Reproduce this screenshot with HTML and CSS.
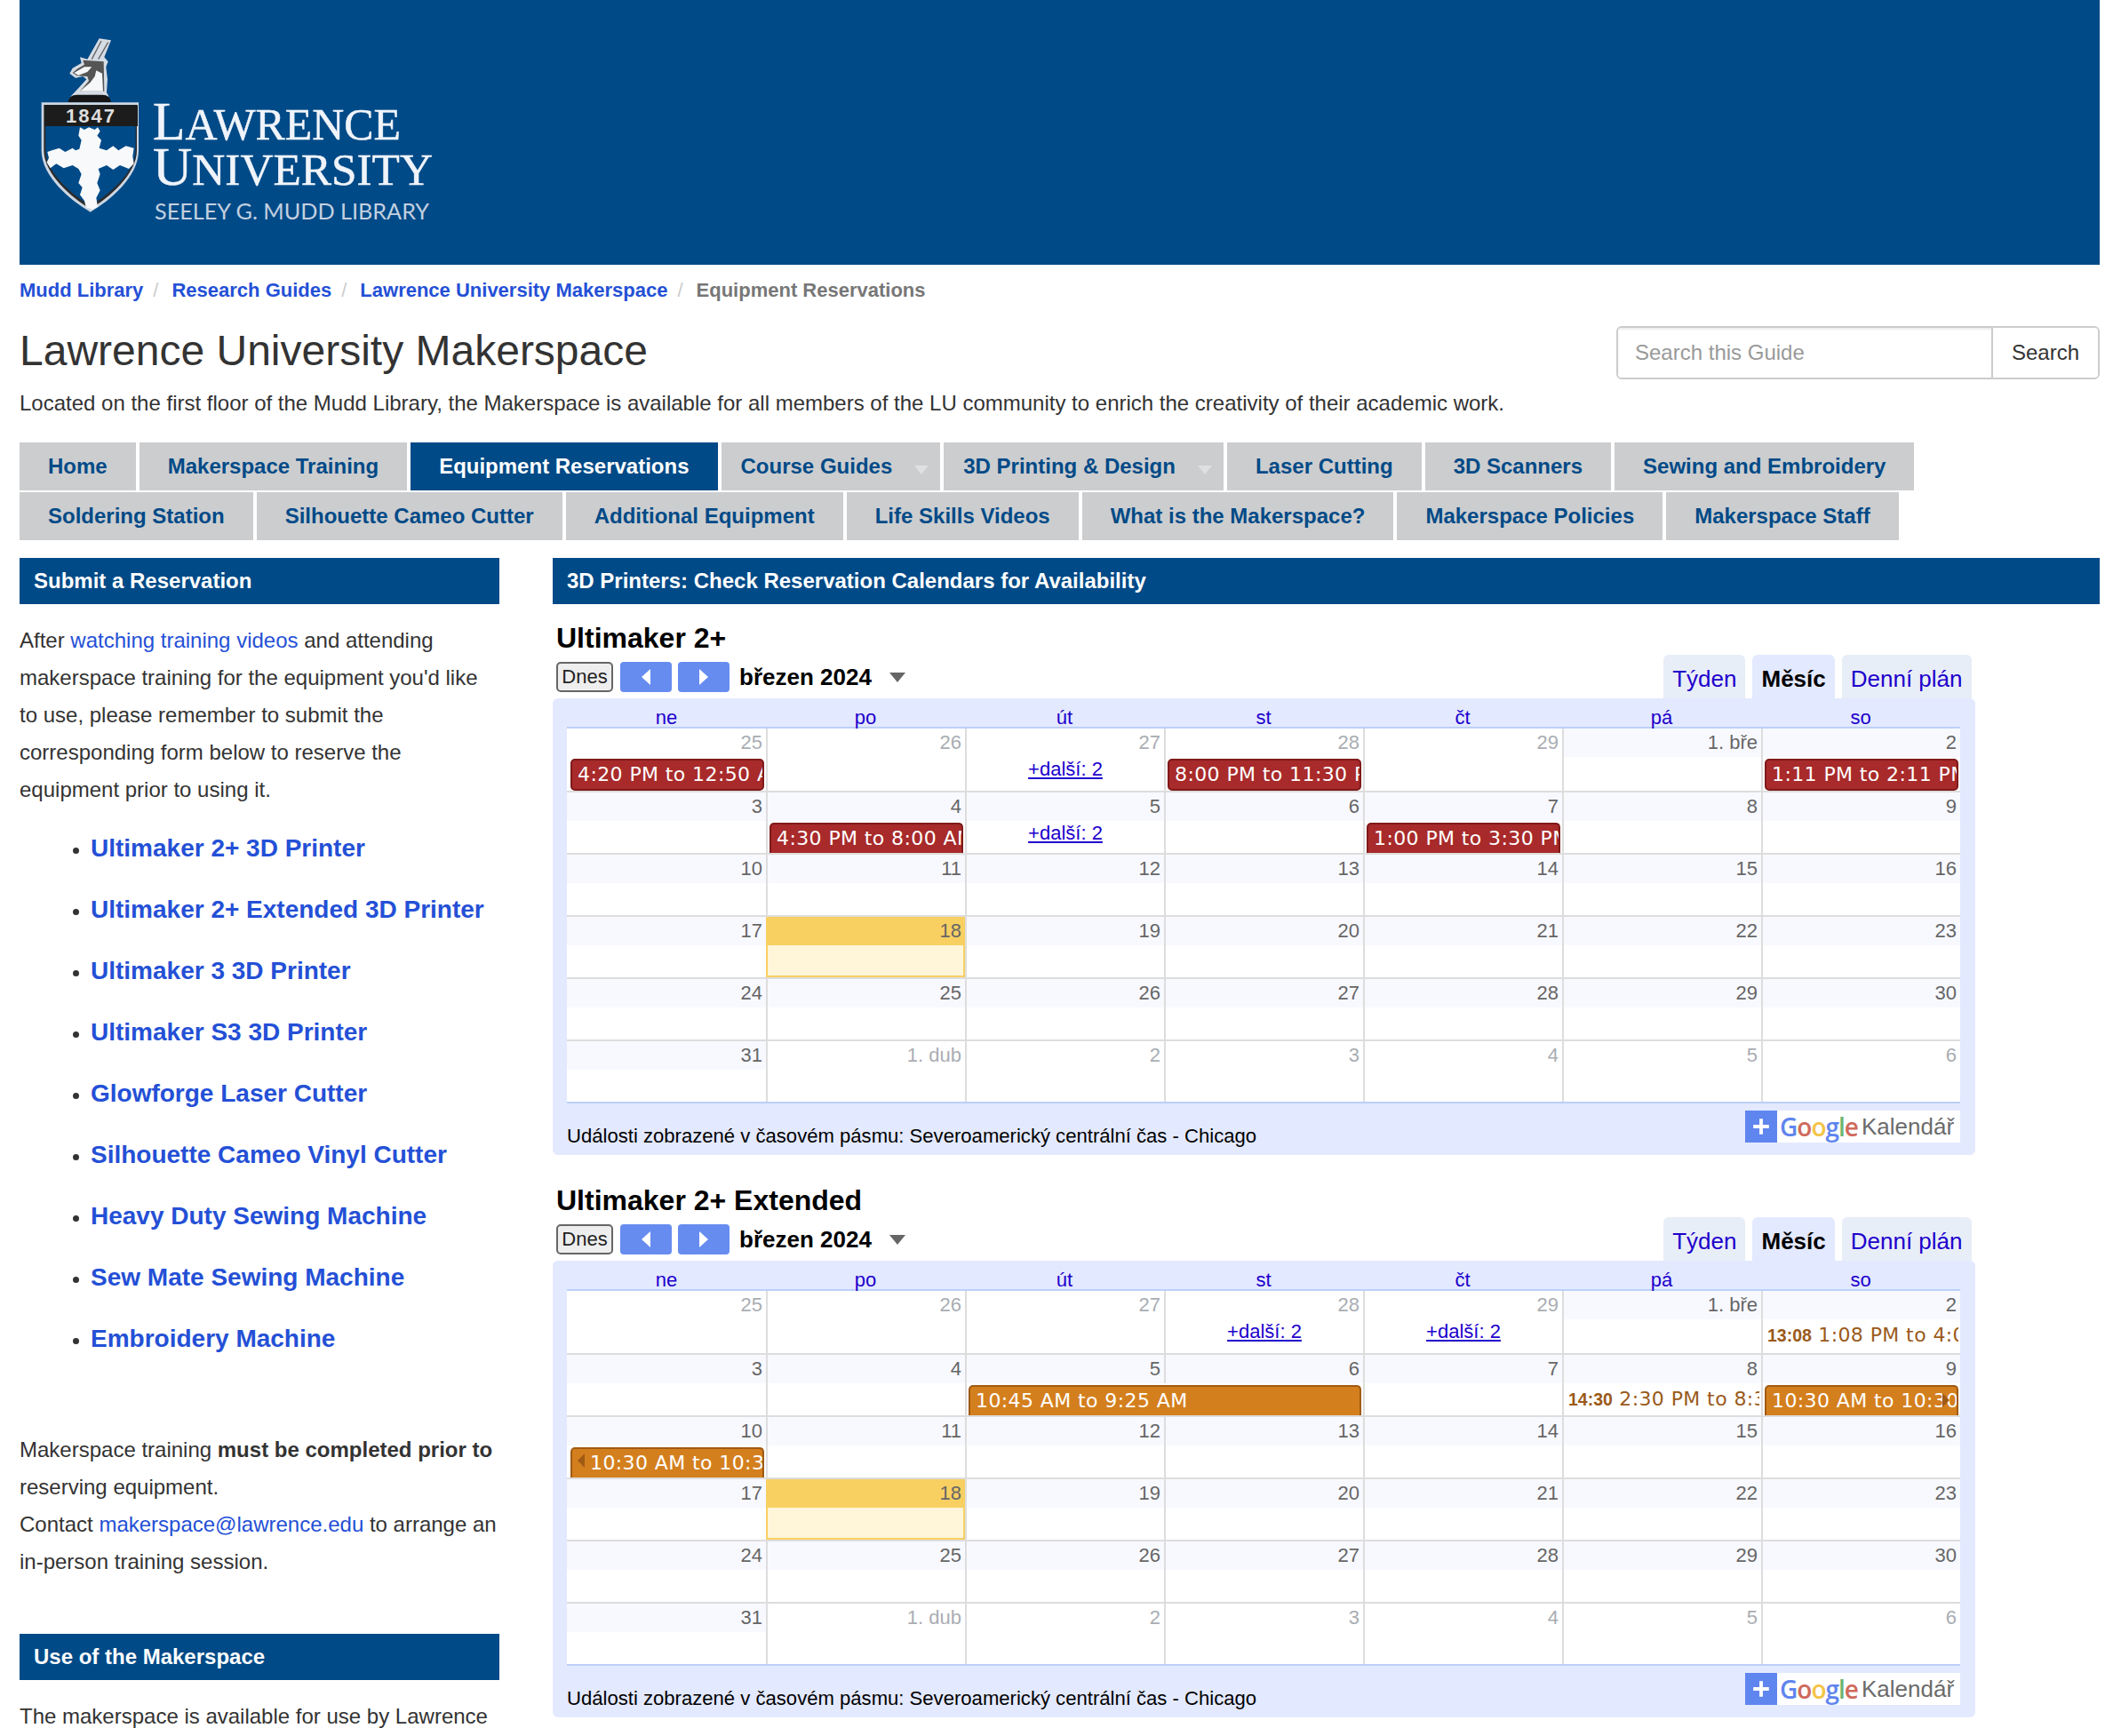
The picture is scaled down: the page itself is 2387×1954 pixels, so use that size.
FILE: index.html
```html
<!DOCTYPE html>
<html lang="cs">
<head>
<meta charset="utf-8">
<title>Equipment Reservations - Lawrence University Makerspace</title>
<link rel="stylesheet" href="styles.css">
</head>
<body>
<header class="banner">
<svg class="logo" viewBox="40 36 460 220" width="460" height="220">
  <g transform="translate(40 36) scale(.33333)">
    <path class="halo" d="M215 22 255 28 232 85 245 100 238 118 243 160 240 205 248 218H118L140 195 172 160 160 150 135 155 115 140 125 122 155 105 150 85 175 92Z"/>
    <path class="head-dark" d="M160 95 230 100 232 200H150L180 165 175 150 140 148 125 138 140 125 165 110Z"/>
    <path class="body-light" d="M205 130 225 140 228 200H150L185 170 200 150Z"/>
    <path class="body-light" d="M130 138 165 118 190 118 175 135 145 146Z"/>
    <path class="horn" d="M190 92 222 30M212 92 245 35"/>
    <path class="mound" d="M110 238C112 222 122 212 140 212H225C243 212 253 222 255 238Z"/>
    <path class="shield" d="M20 238H348V400C348 490 250 570 185 608 120 570 20 490 20 400Z"/>
    <path class="rim" d="M28 246H342V400C342 480 248 560 185 598 122 560 28 480 28 400Z"/>
    <path class="field" d="M34 318H338V400C338 475 246 550 185 588 124 550 34 475 34 400Z"/>
    <rect class="band" x="31" y="247" width="314" height="71"/>
    <path class="cross" d="M150 322 165 330 180 322 200 330 210 322 218 335 208 350 222 365 215 392 240 400 262 385 280 400 305 385 332 392 328 420 332 445 315 462 285 450 262 465 240 450 212 462 218 480 208 510 218 535 205 560 210 590 190 600 170 592 165 570 150 550 158 525 145 510 155 480 145 462 125 450 95 460 70 445 50 460 38 440 45 425 40 405 55 400 80 392 100 405 125 392 135 400 148 395 155 365 145 350Z"/>
  </g>
  <text class="year" x="102.5" y="138">1847</text>
  <text class="lg" x="172" y="157" textLength="279" lengthAdjust="spacingAndGlyphs"><tspan class="lg-big">L</tspan>AWRENCE</text>
  <text class="lg" x="172" y="208" textLength="315" lengthAdjust="spacingAndGlyphs"><tspan class="lg-big">U</tspan>NIVERSITY</text>
  <text class="lg3" x="174" y="247" textLength="309" lengthAdjust="spacingAndGlyphs">SEELEY G. MUDD LIBRARY</text>
</svg>
</header>

<nav class="crumbs">
  <a href="#">Mudd Library</a><span class="sep">/</span>
  <a href="#">Research Guides</a><span class="sep">/</span>
  <a href="#">Lawrence University Makerspace</a><span class="sep">/</span>
  <span class="cur">Equipment Reservations</span>
</nav>

<div class="head">
  <h1>Lawrence University Makerspace</h1>
  <form class="search">
    <input class="search-in" type="text" placeholder="Search this Guide">
    <button class="search-btn" type="button">Search</button>
  </form>
</div>
<p class="desc">Located on the first floor of the Mudd Library, the Makerspace is available for all members of the LU community to enrich the creativity of their academic work.</p>

<ul class="tabs">
  <li><a href="#">Home</a></li>
  <li><a href="#">Makerspace Training</a></li>
  <li class="on"><a href="#">Equipment Reservations</a></li>
  <li class="dd"><a href="#">Course Guides<i class="dd-caret"></i></a></li>
  <li class="dd"><a href="#">3D Printing &amp; Design<i class="dd-caret"></i></a></li>
  <li><a href="#">Laser Cutting</a></li>
  <li><a href="#">3D Scanners</a></li>
  <li><a href="#">Sewing and Embroidery</a></li>
  <li><a href="#">Soldering Station</a></li>
  <li><a href="#">Silhouette Cameo Cutter</a></li>
  <li><a href="#">Additional Equipment</a></li>
  <li><a href="#">Life Skills Videos</a></li>
  <li><a href="#">What is the Makerspace?</a></li>
  <li><a href="#">Makerspace Policies</a></li>
  <li><a href="#">Makerspace Staff</a></li>
</ul>

<div class="cols">
  <aside class="side">
    <h2 class="bar">Submit a Reservation</h2>
    <p class="txt first">After <a href="#">watching training videos</a> and attending makerspace training for the equipment you'd like to use, please remember to submit the corresponding form below to reserve the equipment prior to using it.</p>
    <ul class="gear">
      <li><a href="#">Ultimaker 2+ 3D Printer</a></li>
      <li><a href="#">Ultimaker 2+ Extended 3D Printer</a></li>
      <li><a href="#">Ultimaker 3 3D Printer</a></li>
      <li><a href="#">Ultimaker S3 3D Printer</a></li>
      <li><a href="#">Glowforge Laser Cutter</a></li>
      <li><a href="#">Silhouette Cameo Vinyl Cutter</a></li>
      <li><a href="#">Heavy Duty Sewing Machine</a></li>
      <li><a href="#">Sew Mate Sewing Machine</a></li>
      <li><a href="#">Embroidery Machine</a></li>
    </ul>
    <p class="txt second">Makerspace training <b>must be completed prior to</b> reserving equipment.<br>Contact <a href="#">makerspace@lawrence.edu</a> to arrange an in-person training session.</p>
    <h2 class="bar bar2">Use of the Makerspace</h2>
    <p class="txt first">The makerspace is available for use by Lawrence</p>
  </aside>

  <main class="main">
    <h2 class="bar">3D Printers: Check Reservation Calendars for Availability</h2>

    <section class="cal">
      <h3 class="cal-title">Ultimaker 2+</h3>
      <div class="tools">
        <button class="today-btn" type="button">Dnes</button>
        <button class="arrow" type="button"><i class="tri-l"></i></button>
        <button class="arrow" type="button"><i class="tri-r"></i></button>
        <span class="month">březen 2024</span>
        <i class="month-caret"></i>
        <div class="views"><a class="view" href="#">Týden</a><span class="view cur-view">Měsíc</span><a class="view" href="#">Denní plán</a></div>
      </div>
      <div class="frame">
        <div class="dow"><span>ne</span><span>po</span><span>út</span><span>st</span><span>čt</span><span>pá</span><span>so</span></div>
        <div class="grid">
          <div class="week">
            <div class="d off">25</div><div class="d off">26</div><div class="d off">27</div><div class="d off">28</div><div class="d off">29</div><div class="d">1. bře</div><div class="d">2</div>
            <div class="e"><div class="ev red">4:20 PM to 12:50 AM</div></div><div class="e"></div><div class="e"><a class="more" href="#">+další: 2</a></div><div class="e"><div class="ev red">8:00 PM to 11:30 PM</div></div><div class="e"></div><div class="e"></div><div class="e"><div class="ev red">1:11 PM to 2:11 PM</div></div>
          </div>
          <div class="week">
            <div class="d">3</div><div class="d">4</div><div class="d">5</div><div class="d">6</div><div class="d">7</div><div class="d">8</div><div class="d">9</div>
            <div class="e"></div><div class="e"><div class="ev red cut">4:30 PM to 8:00 AM</div></div><div class="e"><a class="more" href="#">+další: 2</a></div><div class="e"></div><div class="e"><div class="ev red cut">1:00 PM to 3:30 PM</div></div><div class="e"></div><div class="e"></div>
          </div>
          <div class="week">
            <div class="d">10</div><div class="d">11</div><div class="d">12</div><div class="d">13</div><div class="d">14</div><div class="d">15</div><div class="d">16</div>
            <div class="e"></div><div class="e"></div><div class="e"></div><div class="e"></div><div class="e"></div><div class="e"></div><div class="e"></div>
          </div>
          <div class="week">
            <div class="d">17</div><div class="d now">18</div><div class="d">19</div><div class="d">20</div><div class="d">21</div><div class="d">22</div><div class="d">23</div>
            <div class="e"></div><div class="e now-body"></div><div class="e"></div><div class="e"></div><div class="e"></div><div class="e"></div><div class="e"></div>
          </div>
          <div class="week">
            <div class="d">24</div><div class="d">25</div><div class="d">26</div><div class="d">27</div><div class="d">28</div><div class="d">29</div><div class="d">30</div>
            <div class="e"></div><div class="e"></div><div class="e"></div><div class="e"></div><div class="e"></div><div class="e"></div><div class="e"></div>
          </div>
          <div class="week">
            <div class="d">31</div><div class="d off">1. dub</div><div class="d off">2</div><div class="d off">3</div><div class="d off">4</div><div class="d off">5</div><div class="d off">6</div>
            <div class="e"></div><div class="e"></div><div class="e"></div><div class="e"></div><div class="e"></div><div class="e"></div><div class="e"></div>
          </div>
        </div>
        <div class="foot">
          <span class="tz">Události zobrazené v časovém pásmu: Severoamerický centrální čas - Chicago</span>
          <a class="gcal" href="#"><span class="plus"><svg viewBox="0 0 20 20" width="22" height="22"><path d="M10 2v16M2 10h16"/></svg></span><span class="gword"><span class="g1">G</span><span class="g2">o</span><span class="g3">o</span><span class="g1">g</span><span class="g4">l</span><span class="g2">e</span></span><span class="kal">Kalendář</span></a>
        </div>
      </div>
    </section>

    <section class="cal">
      <h3 class="cal-title">Ultimaker 2+ Extended</h3>
      <div class="tools">
        <button class="today-btn" type="button">Dnes</button>
        <button class="arrow" type="button"><i class="tri-l"></i></button>
        <button class="arrow" type="button"><i class="tri-r"></i></button>
        <span class="month">březen 2024</span>
        <i class="month-caret"></i>
        <div class="views"><a class="view" href="#">Týden</a><span class="view cur-view">Měsíc</span><a class="view" href="#">Denní plán</a></div>
      </div>
      <div class="frame">
        <div class="dow"><span>ne</span><span>po</span><span>út</span><span>st</span><span>čt</span><span>pá</span><span>so</span></div>
        <div class="grid">
          <div class="week">
            <div class="d off">25</div><div class="d off">26</div><div class="d off">27</div><div class="d off">28</div><div class="d off">29</div><div class="d">1. bře</div><div class="d">2</div>
            <div class="e"></div><div class="e"></div><div class="e"></div><div class="e"><a class="more" href="#">+další: 2</a></div><div class="e"><a class="more" href="#">+další: 2</a></div><div class="e"></div><div class="e"><div class="ev plain"><b>13:08</b> 1:08 PM to 4:00 PM</div></div>
          </div>
          <div class="week">
            <div class="d">3</div><div class="d">4</div><div class="d">5</div><div class="d">6</div><div class="d">7</div><div class="d">8</div><div class="d">9</div>
            <div class="e"></div><div class="e"></div><div class="e span2"><div class="ev org cut">10:45 AM to 9:25 AM</div></div><div class="e"></div><div class="e"><div class="ev plain"><b>14:30</b> 2:30 PM to 8:30 PM</div></div><div class="e"><div class="ev org cut">10:30 AM to 10:30 AM<i class="next"></i></div></div>
          </div>
          <div class="week">
            <div class="d">10</div><div class="d">11</div><div class="d">12</div><div class="d">13</div><div class="d">14</div><div class="d">15</div><div class="d">16</div>
            <div class="e"><div class="ev org cut cont"><i class="prev"></i>10:30 AM to 10:30 AM</div></div><div class="e"></div><div class="e"></div><div class="e"></div><div class="e"></div><div class="e"></div><div class="e"></div>
          </div>
          <div class="week">
            <div class="d">17</div><div class="d now">18</div><div class="d">19</div><div class="d">20</div><div class="d">21</div><div class="d">22</div><div class="d">23</div>
            <div class="e"></div><div class="e now-body"></div><div class="e"></div><div class="e"></div><div class="e"></div><div class="e"></div><div class="e"></div>
          </div>
          <div class="week">
            <div class="d">24</div><div class="d">25</div><div class="d">26</div><div class="d">27</div><div class="d">28</div><div class="d">29</div><div class="d">30</div>
            <div class="e"></div><div class="e"></div><div class="e"></div><div class="e"></div><div class="e"></div><div class="e"></div><div class="e"></div>
          </div>
          <div class="week">
            <div class="d">31</div><div class="d off">1. dub</div><div class="d off">2</div><div class="d off">3</div><div class="d off">4</div><div class="d off">5</div><div class="d off">6</div>
            <div class="e"></div><div class="e"></div><div class="e"></div><div class="e"></div><div class="e"></div><div class="e"></div><div class="e"></div>
          </div>
        </div>
        <div class="foot">
          <span class="tz">Události zobrazené v časovém pásmu: Severoamerický centrální čas - Chicago</span>
          <a class="gcal" href="#"><span class="plus"><svg viewBox="0 0 20 20" width="22" height="22"><path d="M10 2v16M2 10h16"/></svg></span><span class="gword"><span class="g1">G</span><span class="g2">o</span><span class="g3">o</span><span class="g1">g</span><span class="g4">l</span><span class="g2">e</span></span><span class="kal">Kalendář</span></a>
        </div>
      </div>
    </section>
  </main>
</div>
</body>
</html>
```
FILE: styles.css
```css
*{box-sizing:border-box}
html,body{margin:0;height:1954px;overflow:hidden;background:#fff}
body{padding:0 24px 0 22px;font-family:"Liberation Sans",Arial,sans-serif;font-size:24px;color:#333}
a{color:#2450d6;text-decoration:none}
h1,h2,h3,p,ul{margin:0;padding:0}
i{display:block;font-style:normal}

.banner{height:298px;background:#004a87;padding:36px 0 0 18px}
.logo{display:block}
.halo{fill:#d6dce4}
.head-dark{fill:#555}
.body-light{fill:#f6f7f9}
.horn{fill:none;stroke:#666;stroke-width:4}
.mound{fill:#161616}
.shield{fill:#cdd7e3}
.rim{fill:#2b2b2b}
.field{fill:#004a87}
.band{fill:#1c1c1c}
.year{fill:#dedede;font:700 22px "Liberation Sans",sans-serif;text-anchor:middle;letter-spacing:2px}
.cross{fill:#f7f9fb}
.lg{fill:#f0f4fa;stroke:#f0f4fa;stroke-width:.5;font-family:"Liberation Serif",serif;font-size:51px}
.lg-big{font-size:61px}
.lg3{fill:#c3d0e0;font:400 25px "Lato","Liberation Sans",sans-serif}

.crumbs{height:32px;margin-top:13px;line-height:32px;font-size:22px;font-weight:700;white-space:nowrap;display:flex}
.sep{color:#ccc;font-weight:400;padding:0 15px 0 11px}
.cur{color:#777}

.head{display:flex;justify-content:space-between;margin-top:24px;height:60px}
h1{font-size:48px;font-weight:400;line-height:56px;color:#333}
.search{display:flex;width:544px;height:60px;border:2px solid #ccc;border-radius:6px;overflow:hidden}
.search-in{flex:1;min-width:0;border:0;padding:0 19px;font:24px "Liberation Sans",sans-serif;color:#555;box-shadow:inset 0 2px 2px rgba(0,0,0,.08);outline:0}
.search-in::placeholder{color:#999;opacity:1}
.search-btn{width:120px;border:0;border-left:2px solid #ccc;background:#fff;font:24px "Liberation Sans",sans-serif;color:#333;padding:0}
.desc{margin-top:9px;line-height:36px;font-size:24px}

.tabs{list-style:none;display:flex;flex-wrap:wrap;gap:2px 4px;margin-top:26px;width:2200px}
.tabs li{background:#cccdcf;height:54px}
.tabs a{display:flex;align-items:center;height:54px;padding:0 32px;font-weight:700;color:#004a87;white-space:nowrap}
.tabs .on{background:#004a87}
.tabs .on a{color:#fff}
.tabs .dd a{padding:0 13px 0 22px}
.dd-caret{width:0;height:0;margin:8px 0 0 25px;border:8px solid transparent;border-top:10px solid #dfe0e2;border-bottom:0}

.cols{display:flex;gap:60px;margin-top:20px;align-items:flex-start}
.side{width:540px;flex:none}
.main{flex:1;min-width:0}
.bar{height:52px;line-height:52px;padding:0 16px;background:#004a87;color:#fff;font-size:24px;font-weight:700}
.txt{line-height:42px}
.first{margin-top:20px}
.gear{list-style:disc;margin-top:10px;padding-left:80px}
.gear li{height:69px;line-height:69px;font-size:28px;font-weight:700;color:#333}
.gear li::marker{font-size:22px}
.second{margin-top:70px}
.bar2{margin-top:60px}

.cal{width:1601px;margin-top:18px}
.cal + .cal{margin-top:31px}
.cal-title{height:39px;line-height:41px;padding-left:4px;font-size:32px;font-weight:700;color:#000}
.tools{display:flex;align-items:flex-start;height:49px;padding:8px 4.5px 0 4px}
.today-btn{width:64px;height:34px;padding:0;border:2px solid #666;border-radius:5px;background:#eee;font:22px "Liberation Sans",sans-serif;color:#222}
.arrow{display:flex;align-items:center;justify-content:center;width:58px;height:34px;padding:0;border:0;border-radius:4px;background:#668cf0;margin-left:7px}
.today-btn + .arrow{margin-left:8px}
.tri-l{border:8px solid transparent;border-left:0;border-right:10px solid #fff;border-top-width:9px;border-bottom-width:9px}
.tri-r{border:8px solid transparent;border-right:0;border-left:10px solid #fff;border-top-width:9px;border-bottom-width:9px}
.month{margin-left:11px;font-size:26px;font-weight:700;line-height:34px;color:#000}
.month-caret{margin:12px 0 0 20px;border:9.5px solid transparent;border-top:11px solid #666;border-bottom:0}
.views{display:flex;gap:8px;margin:-8px 0 0 auto;height:49px}
.view{display:block;padding:0 10px;height:49px;line-height:54px;font-size:26px;background:#e8eef7;color:#2000cc;border-radius:6px 6px 0 0}
.cur-view{background:#e3e9ff;color:#000;font-weight:700}

.frame{background:#e3e9ff;border-radius:6px;padding:0 17px 0 16px;height:514px}
.dow{display:grid;grid-template-columns:repeat(7,224px);height:32px;padding-top:9px;line-height:26px;font-size:22px;text-align:center;color:#2000cc}
.grid{border-top:2px solid #bcd0f8;border-bottom:2px solid #bcd0f8;background:#fff}
.week{display:grid;grid-template-columns:repeat(7,224px);grid-template-rows:32px 36px;border-top:2px solid #ddd}
.week:first-child{border-top:0;grid-template-rows:32px 38px}
.week:first-child .e{padding-top:2px}
.week:first-child .ev{height:36px}
.d{background:#f8f9ff;color:#666;font-size:22px;line-height:31px;text-align:right;padding-right:4px;box-shadow:inset 2px 0 0 #ddd}
.d.off{background:#fff;color:#a9adb3}
.d.now{background:#f8d062;box-shadow:none}
.e{min-width:0;padding:2px 2px 0 4px;box-shadow:inset 2px 0 0 #ddd;text-align:center}
.week > .d:nth-child(7n+1),.week > .e:nth-child(8){box-shadow:none}
.span2{grid-column:span 2}
.now-body{background:#fff5d8;box-shadow:none;border:2px solid #f8d062;border-top:0}
.ev{position:relative;height:34px;overflow:hidden;white-space:nowrap;text-align:left;font-family:"DejaVu Sans",sans-serif;font-size:22px;letter-spacing:.4px;line-height:32px;padding:0 6px;border-radius:5px}
.red{background:#a82a2a;color:#fff;border:2px solid #7f1a1a}
.org{background:#d47f1e;color:#fff;border:2px solid #a05a14}
.cut{border-bottom:0;border-radius:5px 5px 0 0}
.cont{padding-left:20px}
.plain{border:0;padding:0 0 0 3px;color:#9a5a1a;line-height:32px}
.plain b{font:700 19.5px "Liberation Sans",sans-serif;letter-spacing:0}
.next,.prev{position:absolute;width:0;height:0;border:8.5px solid transparent}
.next{top:7px;right:8px;border-right:0;border-left:8px solid #a05a14}
.prev{top:5px;left:6px;border-left:0;border-right:8px solid #a05a14}
.more{display:block;font-size:22px;line-height:26px;color:#2000cc;text-decoration:underline;margin-top:-1px}

.foot{display:flex;justify-content:space-between;align-items:flex-start;padding-top:8px}
.tz{margin-top:16px;font-size:22.1px;line-height:26px;color:#000}
.gcal{display:flex;align-items:center;width:242px;height:36px;background:#fff}
.plus{display:flex;align-items:center;justify-content:center;width:36px;height:36px;background:#5f85ee;flex:none}
.plus path{fill:none;stroke:#fff;stroke-width:3.5}
.gword{margin-left:3px;font:600 28px "Open Sans",sans-serif;letter-spacing:-1px;line-height:36px}
.g1{color:#5f85ee}.g2{color:#cf6a5c}.g3{color:#f3c447}.g4{color:#6bb56f}
.kal{margin-left:4px;font-size:26px;color:#6b6b6b}
```
